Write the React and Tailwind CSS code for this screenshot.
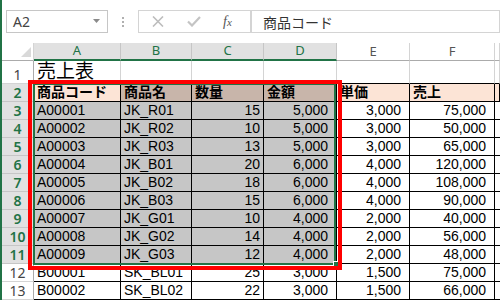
const cellFont = "font-['Liberation_Sans','Noto_Sans_CJK_JP',sans-serif]";

const headers = ["商品コード", "商品名", "数量", "金額", "単価", "売上", ""];

const rows = [
  ["A00001", "JK_R01", "15", "5,000", "3,000", "75,000"],
  ["A00002", "JK_R02", "10", "5,000", "3,000", "50,000"],
  ["A00003", "JK_R03", "13", "5,000", "3,000", "65,000"],
  ["A00004", "JK_B01", "20", "6,000", "4,000", "120,000"],
  ["A00005", "JK_B02", "18", "6,000", "4,000", "108,000"],
  ["A00006", "JK_B03", "15", "6,000", "4,000", "90,000"],
  ["A00007", "JK_G01", "10", "4,000", "2,000", "40,000"],
  ["A00008", "JK_G02", "14", "4,000", "2,000", "56,000"],
  ["A00009", "JK_G03", "12", "4,000", "2,000", "48,000"],
  ["B00001", "SK_BL01", "25", "3,000", "1,500", "75,000"],
  ["B00002", "SK_BL02", "22", "3,000", "1,500", "66,000"],
];

function Toolbar() {
  return (
    <div className="h-[43px] flex items-start pt-[10px] bg-white">
      {/* name box */}
      <div className="ml-[4px] w-[102px] h-[23px] border border-[#c6c6c6] flex items-center justify-between px-[6px]">
        <span className="font-['Noto_Sans',sans-serif] text-[14px] text-[#444] leading-none">A2</span>
        <svg width="8" height="5" viewBox="0 0 8 5">
          <path d="M0 0h7L3.5 4z" fill="#8a8a8a" />
        </svg>
      </div>
      {/* dots */}
      <div className="w-[30px] h-[23px] flex flex-col items-center justify-center gap-[2px]">
        <div className="w-[2px] h-[2px] bg-[#b0b0b0]" />
        <div className="w-[2px] h-[2px] bg-[#b0b0b0]" />
        <div className="w-[2px] h-[2px] bg-[#b0b0b0]" />
      </div>
      {/* formula bar buttons */}
      <div className="w-[113px] h-[23px] border border-[#d4d4d4] flex items-center">
        <svg className="ml-[13px]" width="12" height="11" viewBox="0 0 12 11">
          <path d="M1 0.5l10 10M11 0.5l-10 10" stroke="#bdbdbd" strokeWidth="1.6" />
        </svg>
        <svg className="ml-[23px]" width="14" height="11" viewBox="0 0 14 11">
          <path d="M1 5.5l4 4L13 1" stroke="#c4c4c4" strokeWidth="2.2" fill="none" />
        </svg>
        <span className="ml-[22px] font-['Liberation_Serif',serif] italic text-[14px] text-[#555] leading-none">
          f<span className="text-[11px]">x</span>
        </span>
      </div>
      <div className="flex-1 h-[23px] border border-[#d4d4d4] flex items-center pl-[11px]">
        <span className="font-['Noto_Sans_CJK_JP',sans-serif] text-[14px] text-[#333] leading-none">
          商品コード
        </span>
      </div>
    </div>
  );
}

function ColHeader({ label, active }) {
  return (
    <div
      className={
        active
          ? "bg-[#e1e1e1] border-r border-[#c6c6c6] border-b-2 border-b-[#217346] flex items-center justify-center font-['Noto_Sans',sans-serif] text-[13px] text-[#217346]"
          : "bg-white border-r border-[#d4d4d4] border-b border-b-[#ababab] flex items-center justify-center font-['Noto_Sans',sans-serif] text-[13px] text-[#555]"
      }
    >
      {label}
    </div>
  );
}

function RowHeader({ n, active }) {
  return (
    <div
      className={
        active
          ? "bg-[#e1e1e1] border-r border-[#ababab] border-b border-b-[#c6c6c6] flex items-end justify-center font-['Noto_Sans',sans-serif] font-semibold text-[14px] leading-[17px] text-[#217346]"
          : "bg-white border-r border-[#ababab] border-b border-b-[#d4d4d4] flex items-end justify-center font-['Noto_Sans',sans-serif] text-[14px] leading-[17px] text-[#444]"
      }
    >
      {n}
    </div>
  );
}

export default function App() {
  return (
    <div className="w-[500px] h-[300px] overflow-hidden bg-white flex relative">
      <div className="w-[2px] h-full bg-[#217346] shrink-0" />
      <div className="flex-1 flex flex-col min-w-0">
        <Toolbar />
        <div className="grid grid-cols-[32px_87px_71px_72px_73px_73px_85px_1fr] grid-rows-[18px_23px_18px_repeat(11,18px)]">
          {/* column headers */}
          <div className="bg-white border-r border-[#d4d4d4] border-b border-b-[#ababab] flex items-end justify-end pr-[2px] pb-[3px]">
            <svg width="10" height="10" viewBox="0 0 10 10">
              <path d="M10 0v10H0z" fill="#d9d9d9" />
            </svg>
          </div>
          {["A", "B", "C", "D", "E", "F", ""].map((c, i) => (
            <ColHeader key={i} label={c} active={i < 4} />
          ))}

          {/* row 1 */}
          <RowHeader n={1} />
          <div className={`border-r border-[#d4d4d4] border-b border-b-black flex items-end pl-[3px] overflow-visible whitespace-nowrap ${cellFont} text-[19px] leading-[22px] text-black`}>
            売上表
          </div>
          {[1, 2, 3, 4, 5, 6].map((i) => (
            <div key={i} className="border-r border-[#d4d4d4] border-b border-b-black" />
          ))}

          {/* row 2 headers */}
          <RowHeader n={2} active />
          {headers.map((h, i) => (
            <div
              key={i}
              className={`${i > 0 && i < 4 ? "bg-[#c8b5aa]" : "bg-[#fce4d6]"} border-r border-b border-black flex items-end pl-[3px] overflow-hidden whitespace-nowrap ${cellFont} font-bold text-[14px] leading-[17px] text-black`}
            >
              {h}
            </div>
          ))}

          {/* data rows */}
          {rows.map((r, ri) => {
            const sel = ri < 9;
            return [
              <RowHeader key={"h" + ri} n={ri + 3} active={sel} />,
              ...r.map((v, ci) => {
                const num = ci >= 2;
                const pad = ci === 2 ? "pr-[3px]" : num ? "pr-[8px]" : "pl-[3px]";
                return (
                  <div
                    key={ri + "-" + ci}
                    className={`${sel && ci < 4 ? "bg-[#c6c6c6]" : "bg-white"} border-r border-b border-black flex items-end ${num ? "justify-end" : "justify-start"} ${pad} whitespace-nowrap ${cellFont} text-[14px] leading-[17px] text-black`}
                  >
                    {v}
                  </div>
                );
              }),
              <div key={"g" + ri} className="bg-white border-b border-black" />,
            ];
          })}
        </div>
      </div>

      {/* selection border */}
      <div className="absolute left-[33px] top-[83px] w-[303px] h-[182px] border-2 border-[#217346] pointer-events-none" />
      <div className="absolute left-[333px] top-[261px] w-[8px] h-[8px] bg-[#217346] border border-white" />
      {/* red annotation */}
      <div className="absolute left-[28px] top-[80px] w-[314px] h-[190px] border-[4px] border-[#ff0000] pointer-events-none" />
    </div>
  );
}
